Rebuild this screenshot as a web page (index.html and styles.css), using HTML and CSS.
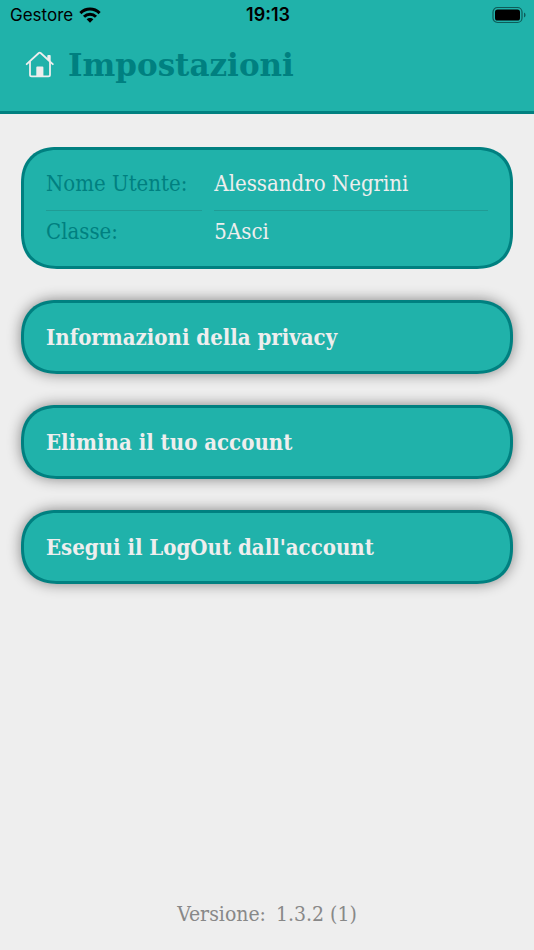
FILE: index.html
```html
<!DOCTYPE html>
<html lang="it">
<head>
<meta charset="utf-8">
<meta name="viewport" content="width=device-width, initial-scale=1">
<title>Impostazioni</title>
<link rel="stylesheet" href="styles.css">
</head>
<body>
<header class="header">
  <div class="status">
    <div class="carrier">
      <span>Gestore</span>
      <svg width="22" height="16" viewBox="0 0 22 16" aria-hidden="true">
        <g fill="none" stroke="#000" stroke-width="3">
          <path d="M1.4 6.1C6.8.7 15.2.7 20.6 6.1"/>
          <path d="M5 9.7C8.4 6.3 13.6 6.3 17 9.7"/>
        </g>
        <path d="M7.6 12.3C9.5 10.4 12.5 10.4 14.4 12.3L11 15.7Z"/>
      </svg>
    </div>
    <time class="clock">19:13</time>
    <svg class="battery" width="34" height="18" viewBox="0 0 34 18" aria-hidden="true">
      <rect x="1" y="1.5" width="29" height="15" rx="4.5" fill="none" stroke="#0e5c58" stroke-width="1.2"/>
      <rect x="3" y="3.5" width="25" height="11" rx="2.6"/>
      <path d="M32 6.5Q33.6 7.2 33.6 9Q33.6 10.8 32 11.5Z" fill="#0e5c58"/>
    </svg>
  </div>
  <div class="titlebar">
    <a class="home" href="#" aria-label="Home">
      <svg width="30" height="28" viewBox="0 0 30 28" fill="none" stroke="#eee" stroke-width="1.8" stroke-linecap="round" stroke-linejoin="round" aria-hidden="true">
        <path d="M1.7 13.2L13.8 2Q14.7 1.2 15.6 2L27.8 13.2"/>
        <path d="M5 11V23.8Q5 25.4 6.6 25.4H23.4Q25 25.4 25 23.8V11"/>
        <path d="M12.2 25V16.5H17.5V25Z" fill="#eee"/>
        <path d="M23.2 8.5V4.8H24.8V10Z" fill="#eee"/>
      </svg>
    </a>
    <h1 class="title">Impostazioni</h1>
  </div>
</header>
<main class="content">
  <dl class="panel profile">
    <dt>Nome Utente:</dt>
    <dd>Alessandro Negrini</dd>
    <dt>Classe:</dt>
    <dd>5Asci</dd>
  </dl>
  <button class="panel action" type="button">Informazioni della privacy</button>
  <button class="panel action" type="button">Elimina il tuo account</button>
  <button class="panel action" type="button">Esegui il LogOut dall'account</button>
</main>
<footer class="version"><span>Versione:</span><span>1.3.2 (1)</span></footer>
</body>
</html>
```
FILE: styles.css
```css
* {
  box-sizing: border-box;
}

body {
  margin: 0;
  min-height: 100vh;
  display: flex;
  flex-direction: column;
  background: #eee;
  color: #eee;
  font-family: "DejaVu Serif Condensed", "DejaVu Serif", serif;
  font-size: 22px;
  line-height: 28px;
}

.header {
  background: #20b2aa;
  border-bottom: 3px solid #008080;
  padding-bottom: 26px;
}

.status {
  display: grid;
  grid-template-columns: 1fr auto 1fr;
  align-items: center;
  height: 30px;
  padding: 0 8px 0 10px;
  color: #000;
  font-family: Inter, sans-serif;
  font-size: 17px;
}

.carrier {
  display: flex;
  align-items: center;
  gap: 6px;
}

.clock {
  font-size: 18px;
  font-weight: 600;
}

.battery {
  justify-self: end;
}

.titlebar {
  display: flex;
  align-items: center;
  gap: 13px;
  margin-top: 15px;
  padding: 0 25px;
}

.home,
.home svg {
  display: block;
}

.title {
  margin: 0;
  color: #008080;
  font-family: "DejaVu Serif", serif;
  font-size: 31px;
  font-weight: 900;
  line-height: 40px;
}

.content {
  flex: 1;
  display: flex;
  flex-direction: column;
  gap: 31px;
  padding: 33px 21px;
}

.panel {
  margin: 0;
  background: #20b2aa;
  border: 3px solid #008080;
  border-radius: 36px;
  corner-shape: superellipse(1.2);
}

.profile {
  display: grid;
  grid-template-columns: 4fr 7fr;
  gap: 7px 12px;
  padding: 20px 22px;
}

.profile dt,
.profile dd {
  margin: 0;
}

.profile dt {
  color: #008080;
}

.profile dt:first-of-type,
.profile dd:first-of-type {
  padding-bottom: 12px;
  border-bottom: 1px solid #209c95;
}

.action {
  padding: 20px 22px;
  color: #eee;
  font: inherit;
  font-weight: 700;
  text-align: left;
  box-shadow: 0 0 14px rgba(0, 0, 0, 0.45);
}

.version {
  display: flex;
  justify-content: center;
  gap: 10px;
  padding-bottom: 22px;
  color: #888;
  font-size: 21px;
}
```
